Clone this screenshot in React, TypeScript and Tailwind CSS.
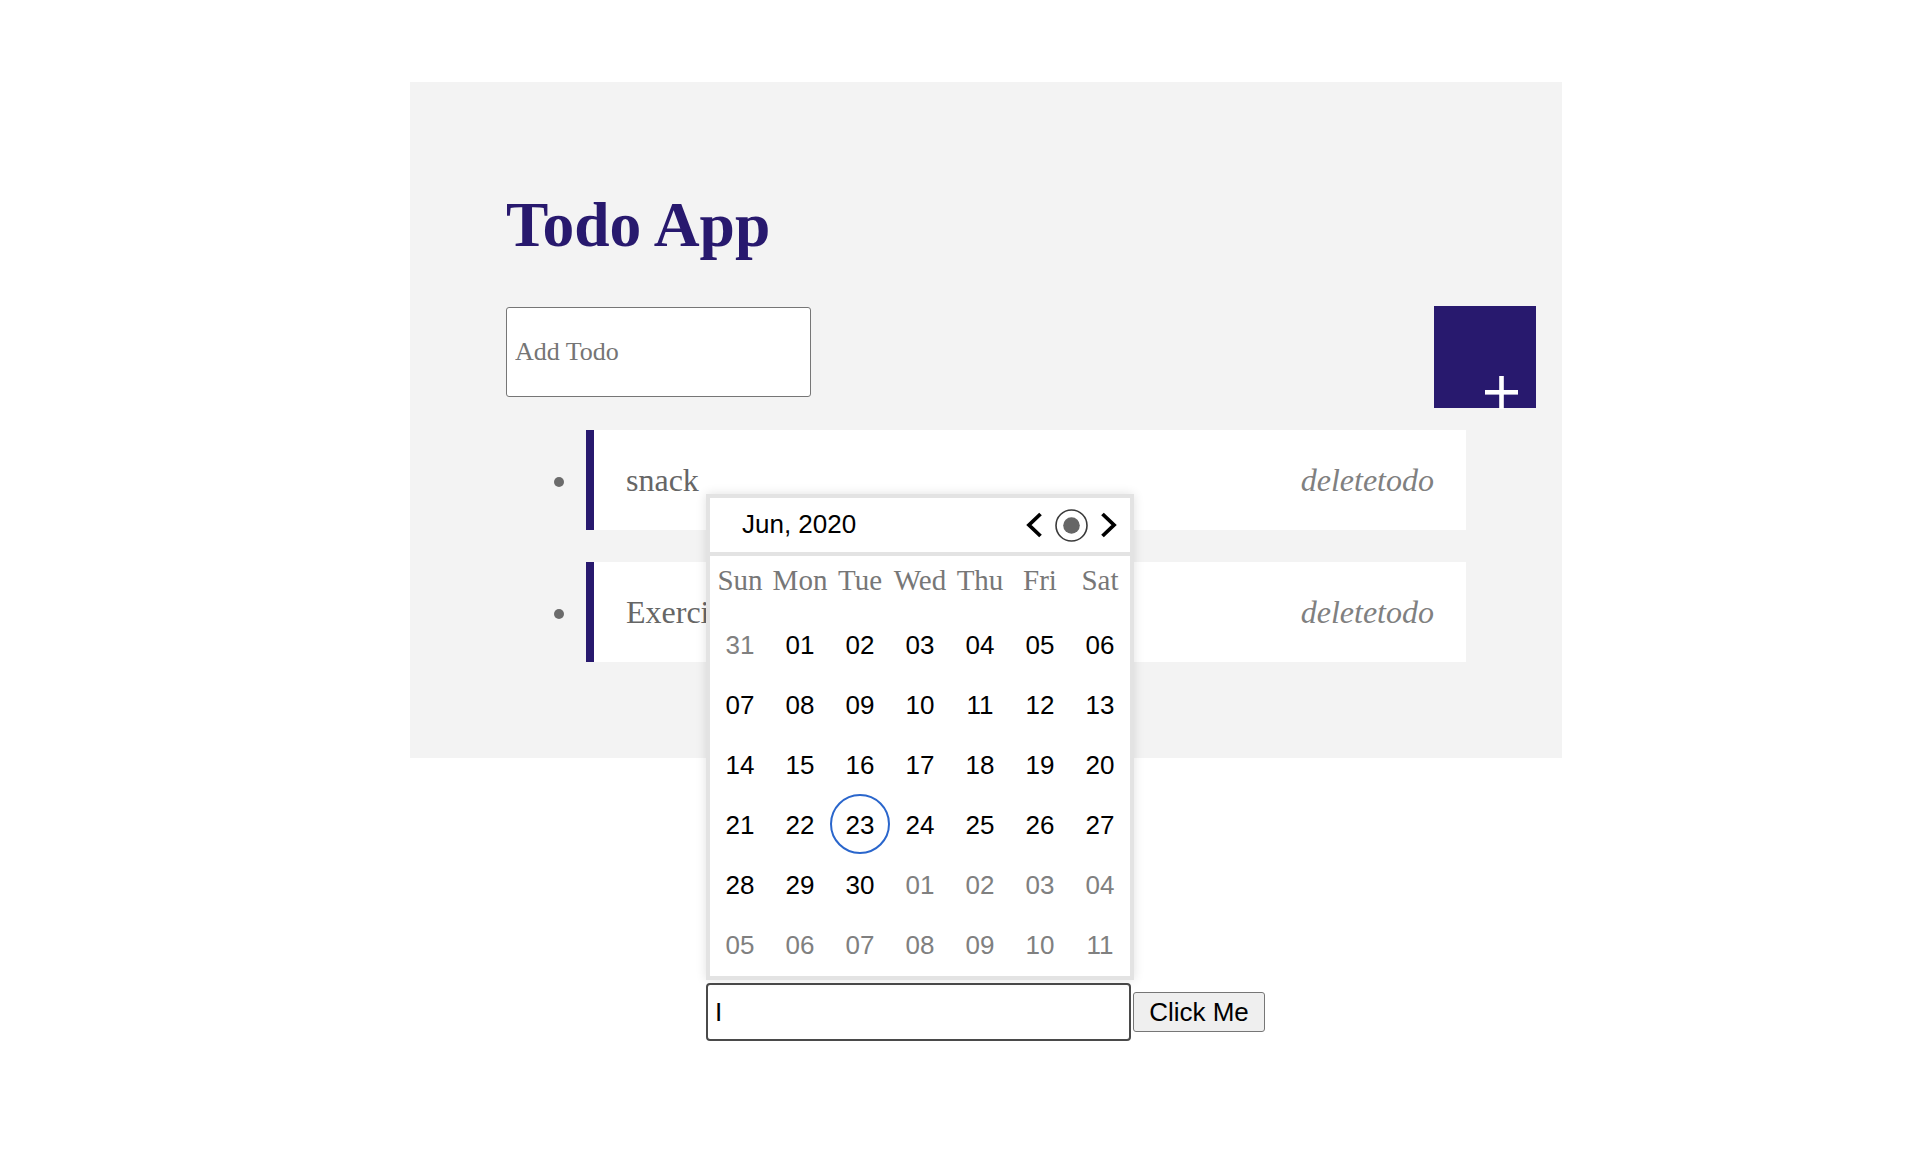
import React from "react";

const serif = "font-['Liberation_Serif','Times_New_Roman',serif]";
const sans = "font-['Liberation_Sans',Arial,sans-serif]";

const weekdays = ["Sun", "Mon", "Tue", "Wed", "Thu", "Fri", "Sat"];

type Day = { d: string; cur: boolean; today?: boolean };

const days: Day[] = [
  { d: "31", cur: false },
  ...["01", "02", "03", "04", "05", "06", "07", "08", "09", "10", "11", "12", "13", "14", "15", "16", "17", "18", "19", "20", "21", "22", "23", "24", "25", "26", "27", "28", "29", "30"].map(
    (d) => ({ d, cur: true, today: d === "23" })
  ),
  ...["01", "02", "03", "04", "05", "06", "07", "08", "09", "10", "11"].map((d) => ({ d, cur: false })),
];

function ChevronLeft() {
  return (
    <svg width="18" height="26" viewBox="0 0 18 26">
      <polyline points="15.5,2 4,13 15.5,24" fill="none" stroke="#000" strokeWidth="3.8" strokeLinejoin="miter" />
    </svg>
  );
}

function ChevronRight() {
  return (
    <svg width="18" height="26" viewBox="0 0 18 26">
      <polyline points="2.5,2 14,13 2.5,24" fill="none" stroke="#000" strokeWidth="3.8" strokeLinejoin="miter" />
    </svg>
  );
}

function TodayIcon() {
  return (
    <svg width="33" height="33" viewBox="0 0 33 33">
      <circle cx="16.5" cy="16.5" r="15.5" fill="none" stroke="#3a3a3a" strokeWidth="1.6" />
      <circle cx="16.5" cy="16.5" r="8.3" fill="#666" />
    </svg>
  );
}

function Calendar() {
  return (
    <div className="absolute left-0 bottom-[calc(100%+3px)] z-10 w-[428px] bg-[#e3e3e3] p-[4px] flex flex-col gap-[4px] shadow-[0_0_10px_rgba(0,0,0,0.12)]">
      <div className={`h-[54px] bg-white flex items-center justify-between pl-[32px] pr-[12px] ${sans}`}>
        <span className="text-[26px] text-black leading-[30px] mt-[-2px]">Jun, 2020</span>
        <div className="flex items-center gap-[12px]">
          <ChevronLeft />
          <TodayIcon />
          <ChevronRight />
        </div>
      </div>
      <div className="bg-white pb-[2px]">
        <div className={`grid grid-cols-7 h-[58px] pt-[8px] ${serif}`}>
          {weekdays.map((w) => (
            <div key={w} className="text-center text-[29px] leading-[32px] text-[#777]">
              {w}
            </div>
          ))}
        </div>
        <div className={`grid grid-cols-7 ${sans}`}>
          {days.map((day, i) => (
            <div key={i} className="h-[60px] flex items-center justify-center pt-[2px]">
              {day.today ? (
                <span className="w-[60px] h-[60px] mt-[-2px] rounded-full border-[2px] border-[#2a66cc] flex items-center justify-center pt-[2px] text-[26px] text-black">
                  {day.d}
                </span>
              ) : (
                <span className={`text-[26px] ${day.cur ? "text-black" : "text-[#808080]"}`}>{day.d}</span>
              )}
            </div>
          ))}
        </div>
      </div>
    </div>
  );
}

function TodoItem({ text }: { text: string }) {
  return (
    <li className="flex items-center">
      <span className="ml-[48px] mr-[22px] mt-[3px] w-[10px] h-[10px] rounded-full bg-[#6b6b6b] shrink-0" />
      <div className="flex-1 h-[100px] bg-white border-l-[8px] border-[#28196e] flex items-center justify-between px-[32px] text-[32px] leading-[36px]">
        <span className="text-[#666]">{text}</span>
        <span className="italic text-[#808080]">deletetodo</span>
      </div>
    </li>
  );
}

export default function App() {
  return (
    <div className="min-h-screen bg-white">
      <div className="pt-[82px] pl-[410px]">
        <div className={`w-[1152px] bg-[#f3f3f3] pt-[108px] pb-[96px] pl-[96px] ${serif}`}>
          <h1 className="text-[63.5px] leading-[69px] font-bold text-[#28196e]">Todo App</h1>
          <div className="mt-[47px] w-[1030px] flex items-start justify-between">
            <input
              placeholder="Add Todo"
              className={`mt-[1px] w-[305px] h-[90px] bg-white border border-[#767676] rounded-[3px] px-[8px] text-[26px] outline-none placeholder:text-[#757575] ${serif}`}
            />
            <button className="w-[102px] h-[102px] bg-[#28196e] flex items-end justify-end pr-[18px]">
              <svg width="33" height="33" viewBox="0 0 33 33" className="mb-[-1px]">
                <rect x="0" y="14" width="33" height="4.6" fill="#fff" />
                <rect x="14.2" y="0" width="4.6" height="33" fill="#fff" />
              </svg>
            </button>
          </div>
          <ul className="mt-[22px] w-[960px] flex flex-col gap-[32px]">
            <TodoItem text="snack" />
            <TodoItem text="Exercise" />
          </ul>
        </div>
        <div className="w-[1151px] mt-[225px] flex justify-center">
          <div className="relative flex items-center gap-[2px]">
            <Calendar />
            <input
              defaultValue="I"
              readOnly
              className={`w-[425px] h-[58px] bg-white border-2 border-[#4a4a4a] rounded-[4px] pl-[7px] text-[26px] text-black outline-none ${sans}`}
            />
            <button
              className={`w-[132px] h-[40px] bg-[#efefef] border border-[#767676] rounded-[3px] text-[26px] leading-[30px] text-black ${sans}`}
            >
              Click Me
            </button>
          </div>
        </div>
      </div>
    </div>
  );
}
